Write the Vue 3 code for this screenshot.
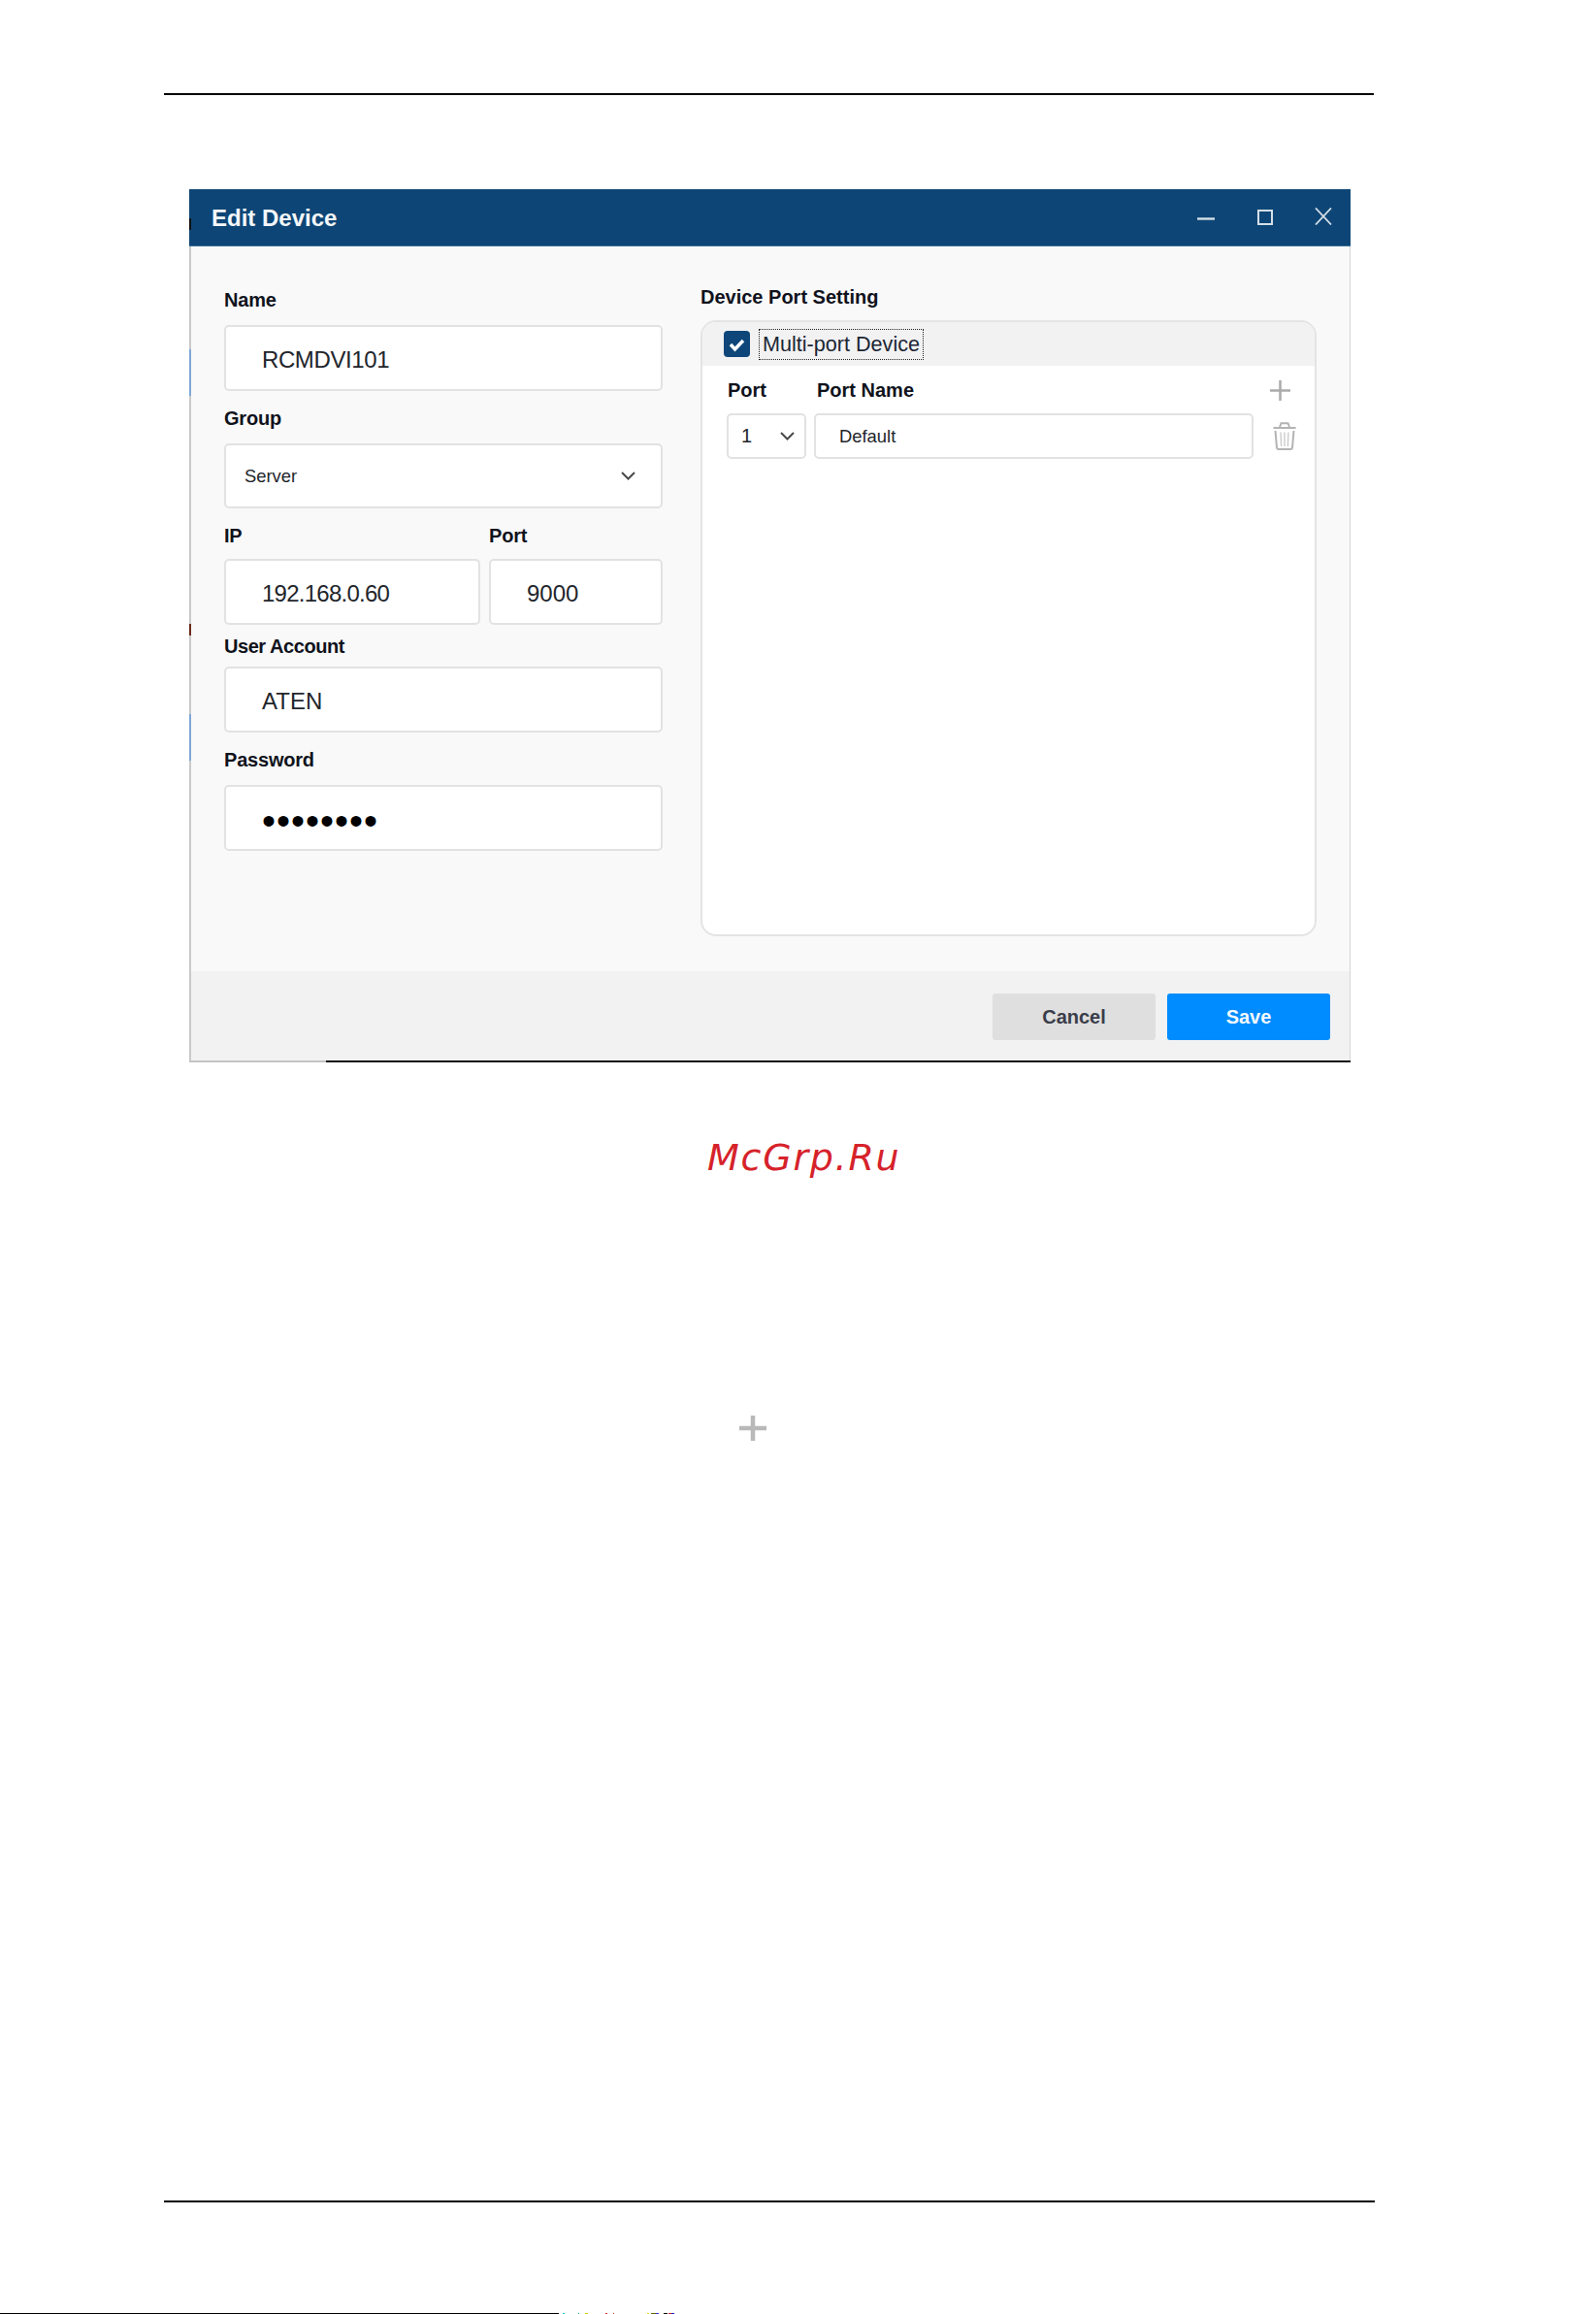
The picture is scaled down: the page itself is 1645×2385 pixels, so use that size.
<script setup>
// Static reproduction of the "Edit Device" manual page; no state needed.
</script>

<template>
  <div class="page">
    <div class="rule rule-top"></div>

    <section class="dialog">
      <span class="edge edge-black"></span>
      <span class="edge edge-blue-a"></span>
      <span class="edge edge-red"></span>
      <span class="edge edge-blue-b"></span>

      <header class="titlebar">
        <span class="title">Edit Device</span>
        <div class="winctl">
          <svg class="ico-min" viewBox="0 0 18 3"><path d="M0 1.5H18" /></svg>
          <svg class="ico-max" viewBox="0 0 16 16"><rect x="1" y="1" width="14" height="14" /></svg>
          <svg class="ico-close" viewBox="0 0 18 18"><path d="M1 .5L17 17.5M17 .5L1 17.5" /></svg>
        </div>
      </header>

      <div class="main">
        <div class="body">
          <div class="left">
            <label class="lab">Name</label>
            <div class="ctl txt gap-a tight-a">RCMDVI101</div>

            <label class="lab m-group">Group</label>
            <div class="ctl sel gap-a">
              <span>Server</span>
              <svg class="chev" viewBox="0 0 15 9"><path d="M1 1L7.5 7.5L14 1" /></svg>
            </div>

            <div class="pair m-ip">
              <div class="col-ip">
                <label class="lab">IP</label>
                <div class="ctl txt gap-b tight-b">192.168.0.60</div>
              </div>
              <div class="col-port">
                <label class="lab">Port</label>
                <div class="ctl txt gap-b">9000</div>
              </div>
            </div>

            <label class="lab m-user">User Account</label>
            <div class="ctl txt gap-c">ATEN</div>

            <label class="lab m-pass">Password</label>
            <div class="ctl txt gap-d dots"><span>••••••••</span></div>
          </div>

          <div class="right">
            <div class="lab">Device Port Setting</div>
            <div class="panel">
              <div class="panel-head">
                <span class="check">
                  <svg viewBox="0 0 27 27"><path d="M7 14l4.5 5L20 10" /></svg>
                </span>
                <span class="focus">Multi-port Device</span>
              </div>
              <div class="ports">
                <div class="lab ph-port">Port</div>
                <div class="lab ph-name">Port Name</div>
                <svg class="plus" viewBox="0 0 21 21"><path d="M10.5 0V21M0 10.5H21" /></svg>

                <div class="ctl port-sel">
                  <span>1</span>
                  <svg class="chev" viewBox="0 0 15 9"><path d="M1 1L7.5 7.5L14 1" /></svg>
                </div>
                <div class="ctl port-name">Default</div>
                <svg class="trash" viewBox="0 0 24 29">
                  <path class="t-main" d="M7 5L8.5 1.2H15.5L17 5M0.5 6H23.5M2.5 9L4 26.5Q4.2 28 6 28H18Q19.8 28 20 26.5L21.5 9" />
                  <path class="t-thin" d="M8 10.5L8.6 25M12 10.5V25M16 10.5L15.4 25" />
                </svg>
              </div>
            </div>
          </div>
        </div>

        <footer class="foot">
          <button class="btn cancel">Cancel</button>
          <button class="btn save">Save</button>
        </footer>
      </div>
      <span class="base-dark"></span>
    </section>

    <div class="mark">McGrp.Ru</div>

    <svg class="bigplus" viewBox="0 0 28 26"><path d="M14 0V26M0 13H28" /></svg>

    <div class="rule rule-bottom"></div>
    <div class="strip"></div>
  </div>
</template>

<style>
html, body { margin: 0; background: #fff; }
</style>

<style scoped>
.page {
  width: 1645px;
  height: 2385px;
  overflow: hidden;
  background: #fff;
  display: flex;
  flex-direction: column;
  font-family: "Liberation Sans", Arial, sans-serif;
  padding-top: 96px;
  box-sizing: border-box;
}
.rule { height: 2px; background: #000; flex: none; }
.rule-top { margin-left: 169px; width: 1247px; }

.dialog {
  position: relative;
  flex: none;
  margin: 97px 0 0 195px;
  width: 1197px;
  height: 900px;
  display: flex;
  flex-direction: column;
}
.edge { position: absolute; left: 0; width: 2px; z-index: 2; }
.edge-black { top: 30px; height: 12px; background: #111; }
.edge-blue-a { top: 165px; height: 48px; background: #7fa8d6; }
.edge-red { top: 448px; height: 12px; background: #6b2a1a; }
.edge-blue-b { top: 541px; height: 48px; background: #7fa8d6; }

.titlebar {
  flex: none;
  height: 59px;
  box-sizing: border-box;
  background: #0d4676;
  border-bottom: 1px solid #3c7097;
  padding-left: 23px;
  display: flex;
  align-items: center;
  justify-content: space-between;
}
.title { color: #f4f7fa; font-size: 24px; font-weight: 700; line-height: 30px; margin-top: 1px; }
.winctl { display: flex; align-items: center; padding-right: 19px; margin-top: 0; }
.winctl svg { display: block; fill: none; stroke: #d5dfe8; }
.ico-min { width: 18px; height: 3px; stroke-width: 2.4; margin-top: 2px; }
.ico-max { width: 16px; height: 16px; stroke-width: 2; margin-left: 44px; }
.ico-close { width: 18px; height: 18px; stroke-width: 1.8; margin-left: 43px; margin-top: -2px; }

.main {
  flex: 1;
  min-height: 0;
  display: flex;
  flex-direction: column;
  background: #f9f9f9;
  border-left: 2px solid #c9c9c9;
  border-right: 1px solid #d6d6d6;
  border-bottom: 2px solid #c4c4c4;
}
.body {
  flex: 1;
  min-height: 0;
  display: flex;
  padding: 40px 0 0 34px;
  gap: 39px;
}
.left { width: 452px; flex: none; padding-top: 3px; }
.left .lab { letter-spacing: -0.2px; }
.left .m-user { letter-spacing: -0.45px; }
.right { width: 635px; flex: none; }

.lab {
  display: block;
  font-size: 20px;
  line-height: 24px;
  font-weight: 700;
  color: #10131c;
  white-space: nowrap;
}
.ctl {
  box-sizing: border-box;
  background: #fff;
  border: 2px solid #e2e2e2;
  border-radius: 5px;
  color: #22252b;
  white-space: nowrap;
}
.txt {
  height: 68px;
  font-size: 24px;
  line-height: 67px;
  padding-left: 37px;
}
.tight-a { letter-spacing: -0.4px; }
.tight-b { letter-spacing: -0.75px; }
.sel {
  height: 67px;
  font-size: 18.4px;
  display: flex;
  align-items: center;
  justify-content: space-between;
  padding: 0 26px 0 19px;
}
.chev { width: 15px; height: 9px; display: block; fill: none; stroke: #4a4a4a; stroke-width: 2; flex: none; }

.gap-a { margin-top: 14px; }
.gap-b { margin-top: 12px; }
.gap-c { margin-top: 9px; }
.gap-d { margin-top: 14px; }
.m-group { margin-top: 16px; }
.m-ip { margin-top: 16px; }
.m-user { margin-top: 10px; }
.m-pass { margin-top: 16px; }

.pair { display: flex; gap: 9px; }
.col-ip { width: 264px; }
.col-port { width: 179px; }

.dots { display: flex; align-items: center; font-size: 40px; color: #000; letter-spacing: 1px; }
.dots span { display: block; line-height: 40px; margin-top: 6px; }

.panel {
  margin-top: 12px;
  box-sizing: border-box;
  height: 635px;
  border: 2px solid #e4e4e4;
  border-radius: 16px;
  background: #fff;
  overflow: hidden;
}
.panel-head {
  height: 45px;
  background: #f2f2f2;
  display: flex;
  align-items: center;
  padding-left: 22px;
  gap: 9px;
}
.check {
  width: 27px;
  height: 27px;
  border-radius: 4px;
  background: #0f4679;
  flex: none;
}
.check svg { display: block; width: 27px; height: 27px; fill: none; stroke: #fff; stroke-width: 3.5; }
.focus {
  box-sizing: border-box;
  width: 170px;
  height: 32px;
  border: 1px dotted #222;
  font-size: 21.6px;
  line-height: 30px;
  padding-left: 3px;
  color: #1b2635;
  white-space: nowrap;
}
.ports {
  display: grid;
  grid-template-columns: 82px 453px 1fr;
  grid-template-rows: 24px 47px;
  column-gap: 8px;
  row-gap: 12px;
  padding: 13px 0 0 25px;
  align-items: center;
}
.ph-port { padding-left: 1px; }
.ph-name { padding-left: 3px; }
.plus { width: 21px; height: 21px; margin-left: 9px; display: block; fill: none; stroke: #aaa; stroke-width: 2.5; }
.port-sel {
  height: 47px;
  display: flex;
  align-items: center;
  justify-content: space-between;
  font-size: 20px;
  padding: 0 10px 0 13px;
}
.port-name {
  height: 47px;
  font-size: 18.4px;
  line-height: 43px;
  padding-left: 24px;
}
.trash { width: 24px; height: 29px; margin-left: 12px; display: block; fill: none; }
.t-main { stroke: #b3b3b3; stroke-width: 2; }
.t-thin { stroke: #c4c4c4; stroke-width: 1.2; }

.foot {
  flex: none;
  height: 92px;
  box-sizing: border-box;
  background: #f2f2f2;
  display: flex;
  justify-content: flex-end;
  align-items: flex-start;
  gap: 12px;
  padding: 23px 20px 0 0;
}
.btn {
  width: 168px;
  height: 48px;
  border: 0;
  border-radius: 3px;
  padding: 0;
  font-family: inherit;
  font-size: 20px;
  font-weight: 700;
}
.cancel { background: #dfdfdf; color: #3a3d4a; }
.save { background: #008cff; color: #f4f9ff; }

.base-dark {
  position: absolute;
  left: 141px;
  right: 0;
  bottom: 0;
  height: 2px;
  background: #111;
}

.mark {
  flex: none;
  margin: 75px 0 0 729px;
  font-family: "DejaVu Sans", sans-serif;
  font-style: italic;
  font-size: 38px;
  line-height: 46px;
  letter-spacing: 1.75px;
  color: #d6222a;
  white-space: nowrap;
}
.bigplus {
  flex: none;
  width: 28px;
  height: 26px;
  margin: 243px 0 0 762px;
  display: block;
  fill: none;
  stroke: #b9b9b9;
  stroke-width: 4.5;
}
.rule-bottom { margin: 783px 0 0 169px; width: 1248px; }
.strip {
  flex: none;
  margin-top: 114px;
  width: 696px;
  height: 1px;
  background:
    linear-gradient(90deg,
      #000 0 576px, #fff 576px 580px,
      #0cc 580px 582px, #fff 582px 596px,
      #0a6 596px 597px, #fff 597px 603px,
      #cc0 603px 606px, #fff 606px 624px,
      #d22 624px 626px, #fff 626px 632px,
      #d22 632px 633px, #fff 633px 667px,
      #dd0 667px 669px, #fff 669px 671px,
      #660 671px 676px, #33c 676px 679px, #fff 679px 684px,
      #000 684px 688px, #fff 688px 689px,
      #c22 689px 692px, #22c 692px 695px, #fff 695px);
}
</style>
